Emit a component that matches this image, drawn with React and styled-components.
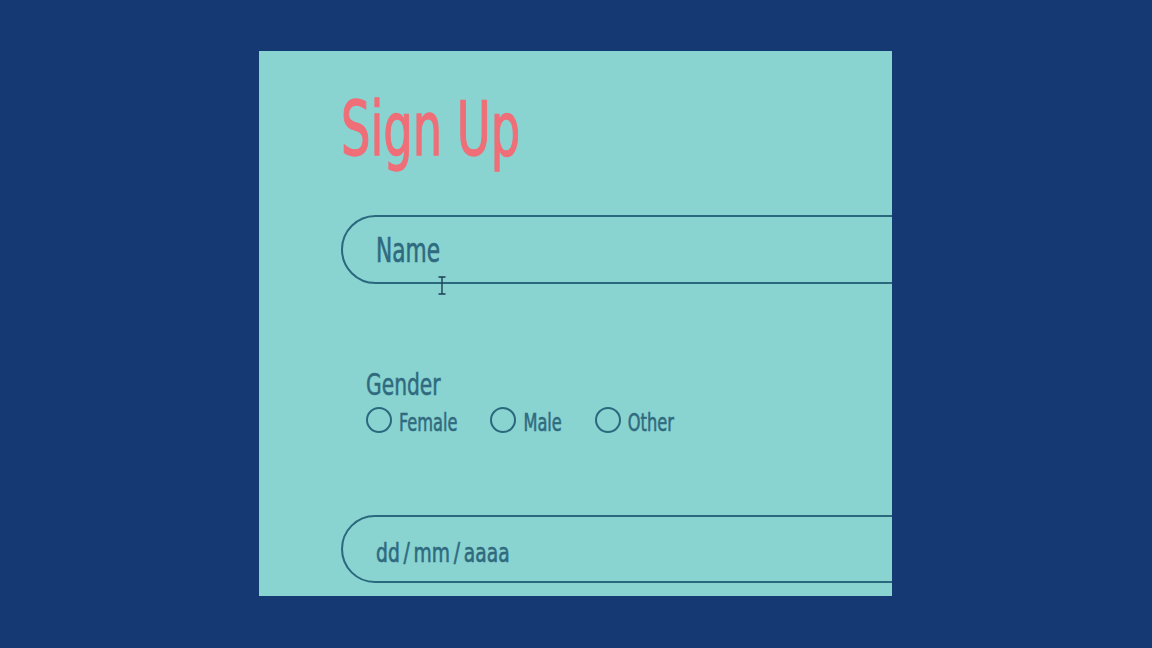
import React from 'react';
import styled, { createGlobalStyle } from 'styled-components';

const GlobalStyle = createGlobalStyle`
  html, body {
    margin: 0;
    padding: 0;
    background: #153a73;
  }
  body {
    font-family: "DejaVu Sans Condensed", "DejaVu Sans", sans-serif;
  }
`;

const Page = styled.div`
  width: 1152px;
  height: 648px;
  box-sizing: border-box;
  padding: 51px 0 0 259px;
`;

const Card = styled.form`
  position: relative;
  width: 633px;
  height: 545px;
  background: #89d3d1;
  overflow: hidden;
  box-sizing: border-box;
  padding: 40px 0 0 82px;
`;

const Title = styled.h1`
  margin: 0;
  font-weight: 400;
  font-size: 75px;
  line-height: 76px;
  color: #ef6e77;
  -webkit-text-stroke: 1.3px #ef6e77;
  white-space: nowrap;
  transform: scaleX(0.687);
  transform-origin: left;
`;

// pill shaped field, label text sits inside like a floating label
const FieldBox = styled.label`
  position: relative;
  display: flex;
  align-items: center;
  width: 620px;
  height: ${p => p.$height || 69}px;
  box-sizing: border-box;
  border: 2px solid #2a687e;
  border-radius: 35px;
  padding-left: 33px;
  margin-top: ${p => p.$top}px;
`;

const FieldText = styled.span`
  display: inline-block;
  font-size: ${p => p.$size}px;
  line-height: ${p => p.$size}px;
  margin-top: ${p => p.$shift || 0}px;
  color: #2f6a7e;
  -webkit-text-stroke: 0.6px #2f6a7e;
  white-space: nowrap;
  transform: scaleX(${p => p.$squeeze});
  transform-origin: left;
`;

const FieldInput = styled.input`
  position: absolute;
  inset: 0;
  width: 100%;
  border: none;
  background: transparent;
  outline: none;
  color: transparent;
  caret-color: transparent;
`;

const GenderGroup = styled.div`
  margin: 86px 0 0 25px;
`;

const GroupLabel = styled.div`
  font-size: 30px;
  line-height: 30px;
  color: #2f6a7e;
  -webkit-text-stroke: 0.5px #2f6a7e;
  transform: scaleX(0.75);
  transform-origin: left;
`;

const Options = styled.div`
  display: flex;
  align-items: center;
  gap: 33px;
  margin-top: 7px;
  height: 26px;
`;

const Option = styled.label`
  display: flex;
  align-items: center;
  gap: 7px;
`;

const Radio = styled.span`
  width: 26px;
  height: 26px;
  box-sizing: border-box;
  border: 2px solid #2a687e;
  border-radius: 50%;
`;

const OptionText = styled.span`
  display: inline-block;
  font-size: 18px;
  line-height: 26px;
  color: #2f6a7e;
  -webkit-text-stroke: 0.4px #2f6a7e;
  transform: scaleY(1.37);
  transform-origin: 0 5.4px;
`;

const Cursor = styled.svg`
  position: absolute;
  left: 178px;
  top: 225px;
`;

export default function App() {
  return (
    <Page>
      <GlobalStyle />
      <Card>
        <Title>Sign Up</Title>
        <FieldBox $top={48}>
          <FieldText $size={34} $squeeze={0.71}>Name</FieldText>
          <FieldInput type="text" aria-label="Name" />
        </FieldBox>
        <GenderGroup role="radiogroup">
          <GroupLabel>Gender</GroupLabel>
          <Options>
            {['Female', 'Male', 'Other'].map(o => (
              <Option key={o}>
                <Radio />
                <OptionText>{o}</OptionText>
              </Option>
            ))}
          </Options>
        </GenderGroup>
        <FieldBox $top={82} $height={68}>
          <FieldText $size={27} $squeeze={0.77} $shift={6}>dd&#8201;/&#8201;mm&#8201;/&#8201;aaaa</FieldText>
          <FieldInput type="text" aria-label="Date of birth" />
        </FieldBox>
        <Cursor width="10" height="19" viewBox="0 0 10 19">
          <path d="M1.5 1h7M5 1v17M1.5 18h7" stroke="#1d3f55" strokeWidth="1.4" fill="none" />
        </Cursor>
      </Card>
    </Page>
  );
}
